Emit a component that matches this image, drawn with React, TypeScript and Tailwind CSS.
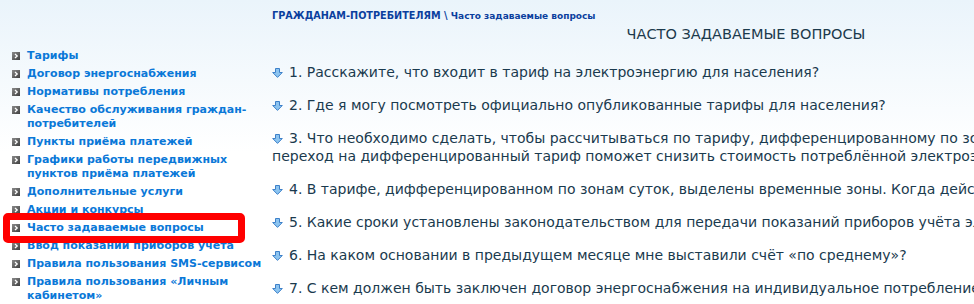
import React from "react";

const menu: string[][] = [
  ["Тарифы"],
  ["Договор энергоснабжения"],
  ["Нормативы потребления"],
  ["Качество обслуживания граждан-", "потребителей"],
  ["Пункты приёма платежей"],
  ["Графики работы передвижных", "пунктов приёма платежей"],
  ["Дополнительные услуги"],
  ["Акции и конкурсы"],
  ["Часто задаваемые вопросы"],
  ["Ввод показаний приборов учета"],
  ["Правила пользования SMS-сервисом"],
  ["Правила пользования «Личным", "кабинетом»"],
];

const questions: string[][] = [
  ["1. Расскажите, что входит в тариф на электроэнергию для населения?"],
  ["2. Где я могу посмотреть официально опубликованные тарифы для населения?"],
  [
    "3. Что необходимо сделать, чтобы рассчитываться по тарифу, дифференцированному по зонам суток? Каким образом",
    "переход на дифференцированный тариф поможет снизить стоимость потреблённой электроэнергии?",
  ],
  ["4. В тарифе, дифференцированном по зонам суток, выделены временные зоны. Когда действуют эти зоны?"],
  ["5. Какие сроки установлены законодательством для передачи показаний приборов учёта электроэнергии?"],
  ["6. На каком основании в предыдущем месяце мне выставили счёт «по среднему»?"],
  ["7. С кем должен быть заключен договор энергоснабжения на индивидуальное потребление?"],
];

function Bullet() {
  return (
    <svg width="8" height="8" viewBox="0 0 8 8" className="shrink-0 mt-[3px] mr-[7px]">
      <defs>
        <linearGradient id="bl" x1="0" y1="0" x2="1" y2="1">
          <stop offset="0%" stopColor="#8a8a8a" />
          <stop offset="100%" stopColor="#3f3f3f" />
        </linearGradient>
      </defs>
      <rect width="8" height="8" fill="url(#bl)" />
      <path d="M3 2 L5.2 4 L3 6" fill="none" stroke="#fff" strokeWidth="1.3" />
    </svg>
  );
}

function DownArrow() {
  return (
    <svg width="11" height="10" viewBox="0 0 11 10" className="inline-block align-[-1px] mr-[6px]">
      <path
        d="M3.5 0.5 H7.5 V4.5 H10.3 L5.5 9.4 L0.7 4.5 H3.5 Z"
        fill="#8cc4f0"
        stroke="#3d80c9"
        strokeWidth="1"
        strokeLinejoin="round"
      />
    </svg>
  );
}

export default function App() {
  return (
    <div
      className="relative w-[974px] h-[304px] overflow-hidden bg-gradient-to-b from-[#eaf4fb] via-white to-white"
      style={{ fontFamily: '"DejaVu Sans", Verdana, sans-serif' }}
    >
      <div className="flex h-full">
        {/* left menu */}
        <div className="w-[260px] shrink-0 pl-[12px] pt-[49px] flex flex-col gap-[4px]">
          {menu.map((lines, i) => (
            <div key={i} className="flex">
              <Bullet />
              <div className="text-[11px] leading-[14px] font-bold text-[#0a78d8] whitespace-nowrap">
                {lines.map((l, j) => (
                  <div key={j}>{l}</div>
                ))}
              </div>
            </div>
          ))}
        </div>

        {/* main */}
        <div className="pl-[12px] pt-[10px] min-w-0 flex-1">
          <div className="text-[9.7px] leading-[12px] font-bold text-[#0b3f9e] whitespace-nowrap">
            ГРАЖДАНАМ-ПОТРЕБИТЕЛЯМ \ <span className="text-[9px]">Часто задаваемые вопросы</span>
          </div>
          <div className="w-[948px] text-center text-[14.5px] leading-[16px] text-[#1c3a4c] mt-[4px]">
            ЧАСТО ЗАДАВАЕМЫЕ ВОПРОСЫ
          </div>
          <div className="mt-[21px] flex flex-col gap-[15px] text-[14px] leading-[18px] text-[#1a3a4e] whitespace-nowrap">
            {questions.map((lines, i) => (
              <div key={i}>
                <DownArrow />
                {lines[0]}
                {lines[1] && (
                  <>
                    <br />
                    {lines[1]}
                  </>
                )}
              </div>
            ))}
          </div>
        </div>
      </div>

      {/* red highlight */}
      <div className="absolute left-[3px] top-[213px] w-[242px] h-[30px] border-[7px] border-[#ff0000] rounded-[5px]" />
    </div>
  );
}
